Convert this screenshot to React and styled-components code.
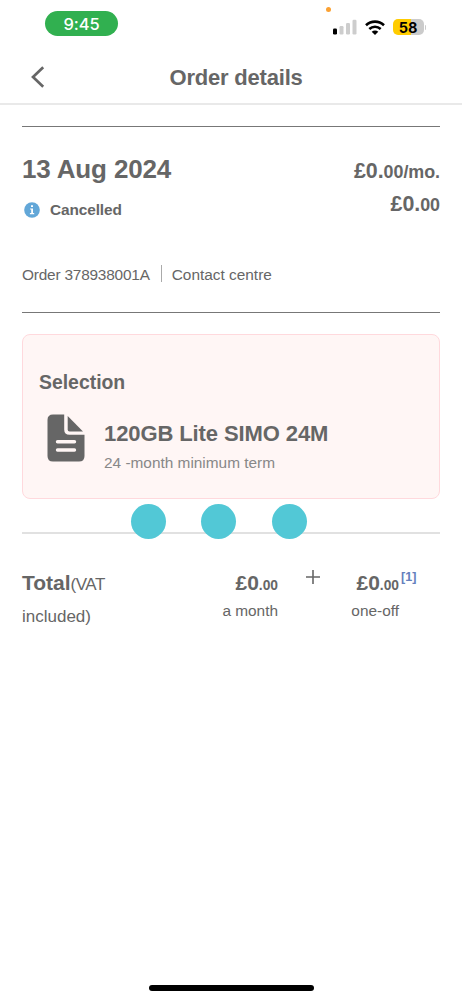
import React from "react";
import styled, { createGlobalStyle } from "styled-components";

function App() {
  return (
    <Screen>
      <GlobalStyle />
      <StatusBar />
      <Header>
        <BackIcon viewBox="0 0 14 22">
          <path d="M12.2 1.2L2 11L12.2 20.8" />
        </BackIcon>
        <Title>Order details</Title>
      </Header>
      <Content>
        <OrderSummary />
        <Selection />
        <Total />
      </Content>
      <HomeIndicator />
    </Screen>
  );
}

function StatusBar() {
  return (
    <StatusContainer>
      <Clock>9:45</Clock>
      <RecordingDot />
      <StatusIcons>
        <svg width="24" height="16" viewBox="0 0 24 16">
          <rect x="0" y="9.5" width="4" height="6" rx="1.2" fill="#000" />
          <rect x="6.5" y="7" width="4" height="8.5" rx="1.2" fill="#cdcdcd" />
          <rect x="13" y="4" width="4" height="11.5" rx="1.2" fill="#cdcdcd" />
          <rect x="19.5" y="0.7" width="4" height="14.8" rx="1.2" fill="#cdcdcd" />
        </svg>
        <WifiIcon viewBox="0 0 20 15">
          <path d="M1 5.3C6.2 0.4 13.8 0.4 19 5.3" />
          <path d="M4.3 9C7.6 6 12.4 6 15.7 9" />
          <path
            className="base"
            d="M10 15L6.7 11.8C8.5 10.2 11.5 10.2 13.3 11.8Z"
          />
        </WifiIcon>
        <Battery>58</Battery>
        <BatteryTip />
      </StatusIcons>
    </StatusContainer>
  );
}

function OrderSummary() {
  return (
    <Summary>
      <SummaryRow>
        <div>
          <OrderDate>13 Aug 2024</OrderDate>
          <OrderStatus>
            <svg width="16" height="16" viewBox="0 0 16 16">
              <circle cx="8" cy="8" r="7.8" fill="#62a7d8" />
              <path
                d="M7 3.2H9V5H7ZM6.1 6.4H9V11H10.2V12.2H5.9V11H7.2V7.6H6.1Z"
                fill="#fff"
              />
            </svg>
            Cancelled
          </OrderStatus>
        </div>
        <Prices>
          <Price>
            £0.<small>00/mo.</small>
          </Price>
          <Price>
            £0.<small>00</small>
          </Price>
        </Prices>
      </SummaryRow>
      <OrderInfo>
        <span>Order 378938001A</span>
        <Separator />
        <Channel>Contact centre</Channel>
      </OrderInfo>
    </Summary>
  );
}

function Selection() {
  return (
    <Card>
      <CardTitle>Selection</CardTitle>
      <Plan>
        <svg width="38" height="48" viewBox="0 0 38 48">
          <path
            d="M6 0.5H17.2V15.5Q17.2 20.8 22.5 20.8H37.5V42Q37.5 47.5 32 47.5H6Q0.5 47.5 0.5 42V6Q0.5 0.5 6 0.5Z"
            fill="#666"
          />
          <path d="M20.7 2L36 17.5H22.5Q20.7 17.5 20.7 15.7Z" fill="#666" />
          <path
            d="M10.5 27.7H27.5M10.5 36H27.5"
            stroke="#fff6f5"
            strokeWidth="3.4"
            strokeLinecap="round"
          />
        </svg>
        <div>
          <PlanName>120GB Lite SIMO 24M</PlanName>
          <PlanTerm>24 -month minimum term</PlanTerm>
        </div>
      </Plan>
    </Card>
  );
}

function Total() {
  return (
    <TotalContainer>
      <Loader>
        <Dot />
        <Dot />
        <Dot />
      </Loader>
      <TotalLabel>
        <TotalLine>
          <strong>Total</strong>
          <span>(VAT</span>
        </TotalLine>
        <TotalLine>included)</TotalLine>
      </TotalLabel>
      <Amount $width={136}>
        <AmountValue>
          £0<small>.00</small>
        </AmountValue>
        <AmountUnit>a month</AmountUnit>
      </Amount>
      <PlusIcon viewBox="0 0 14 14">
        <path d="M7 0V14M0 7H14" />
      </PlusIcon>
      <Amount $width={79}>
        <AmountValue>
          £0<small>.00</small>
        </AmountValue>
        <AmountUnit>one-off</AmountUnit>
      </Amount>
      <Footnote>[1]</Footnote>
    </TotalContainer>
  );
}

export default App;

const GlobalStyle = createGlobalStyle`
  * {
    box-sizing: border-box;
  }

  body {
    margin: 0;
    background-color: #fff;
  }

  svg {
    display: block;
    flex-shrink: 0;
  }
`;

const Screen = styled.div`
  display: flex;
  flex-direction: column;
  width: 462px;
  height: 999px;
  overflow: hidden;
  color: #666;
  background-color: #fff;
  font-family: "Liberation Sans", Arial, sans-serif;
`;

const StatusContainer = styled.div`
  display: flex;
  height: 50px;
  padding-left: 45px;
`;

const Clock = styled.div`
  width: 73px;
  height: 25px;
  margin-top: 11px;
  border-radius: 13px;
  background-color: #31b050;
  color: #fff;
  font-family: Inter, sans-serif;
  font-size: 16.5px;
  font-weight: 500;
  line-height: 26px;
  letter-spacing: -0.1px;
  text-align: center;
`;

const RecordingDot = styled.div`
  width: 5px;
  height: 5px;
  margin: 7px 0 0 207.5px;
  border-radius: 50%;
  background-color: #fba132;
`;

const StatusIcons = styled.div`
  display: flex;
  align-items: center;
  height: 16px;
  margin: 19px 0 0 2px;
`;

const WifiIcon = styled.svg`
  width: 20px;
  height: 15px;
  margin-left: 8px;
  fill: none;
  stroke: #000;
  stroke-width: 2.6;

  .base {
    fill: #000;
    stroke: none;
  }
`;

const Battery = styled.div`
  width: 31px;
  height: 16px;
  margin-left: 8px;
  border-radius: 5px;
  background: linear-gradient(90deg, #ffcc00 18px, #cbcbcb 18px);
  color: #000;
  font-family: Inter, sans-serif;
  font-size: 14.5px;
  font-weight: 700;
  line-height: 17px;
  text-align: center;
`;

const BatteryTip = styled.div`
  width: 1.5px;
  height: 5px;
  margin-left: 1px;
  border-radius: 0 2px 2px 0;
  background-color: #cbcbcb;
`;

const Header = styled.header`
  display: flex;
  align-items: center;
  height: 55px;
  border-bottom: 2px solid #e9e9e9;
  padding-left: 31px;
`;

const BackIcon = styled.svg`
  width: 14px;
  height: 22px;
  fill: none;
  stroke: #666;
  stroke-width: 2.7;
`;

const Title = styled.h1`
  margin: 3px 0 0 124.5px;
  font-size: 22px;
  line-height: 26px;
  letter-spacing: -0.2px;
`;

const Content = styled.main`
  flex: 1;
  padding: 21px 22px 0;
`;

const Summary = styled.section`
  height: 187px;
  border-top: 1px solid #777;
  border-bottom: 1px solid #777;
`;

const SummaryRow = styled.div`
  display: flex;
  justify-content: space-between;
  height: 134px;
  padding-top: 27px;
`;

const OrderDate = styled.h2`
  margin: 0;
  font-size: 26px;
  line-height: 30px;
  letter-spacing: -0.15px;
`;

const OrderStatus = styled.div`
  display: flex;
  align-items: center;
  gap: 10px;
  margin: 16px 0 0 2px;
  font-size: 15.4px;
  font-weight: 700;
  line-height: 20px;
  letter-spacing: -0.1px;
`;

const Prices = styled.div`
  padding-top: 1px;
  text-align: right;
`;

const Price = styled.div`
  font-size: 21.4px;
  font-weight: 700;
  line-height: 32px;
  letter-spacing: -0.05px;

  small {
    font-size: 17.9px;
  }
`;

const OrderInfo = styled.div`
  display: flex;
  align-items: center;
  height: 27px;
  font-size: 15.4px;
  line-height: 20px;
  letter-spacing: -0.2px;
`;

const Channel = styled.span`
  letter-spacing: 0;
`;

const Separator = styled.span`
  width: 1px;
  height: 17px;
  margin: 0 10px 2px 11px;
  background-color: #aaa;
`;

const Card = styled.section`
  height: 165px;
  margin-top: 21px;
  padding: 36px 16px 0;
  border: 1px solid #ffd9dd;
  border-radius: 8px;
  background-color: #fff6f5;
`;

const CardTitle = styled.h3`
  margin: 0;
  font-size: 19.4px;
  line-height: 22px;
`;

const Plan = styled.div`
  display: flex;
  gap: 19px;
  margin: 21px 0 0 8px;
`;

const PlanName = styled.div`
  margin-top: 7px;
  font-size: 22px;
  font-weight: 700;
  line-height: 26px;
  letter-spacing: -0.1px;
  white-space: nowrap;
`;

const PlanTerm = styled.div`
  margin-top: 6px;
  color: #888;
  font-size: 15.4px;
  line-height: 20px;
`;

const TotalContainer = styled.section`
  position: relative;
  display: flex;
  align-items: flex-start;
  margin-top: 33px;
  padding-top: 37px;
  border-top: 2px solid #e1e1e1;
`;

// loading dots float over the divider
const Loader = styled.div`
  position: absolute;
  top: -30px;
  left: 108.5px;
  display: flex;
  gap: 35.7px;
`;

const Dot = styled.div`
  width: 35px;
  height: 35px;
  border-radius: 50%;
  background-color: #52c8d6;
`;

const TotalLabel = styled.div`
  display: flex;
  flex-direction: column;
  gap: 8px;
  width: 120px;
  font-size: 17px;
`;

const TotalLine = styled.div`
  display: flex;
  align-items: baseline;
  line-height: 24px;

  strong {
    font-size: 21px;
  }

  span {
    letter-spacing: -0.5px;
  }
`;

const Amount = styled.div`
  display: flex;
  flex-direction: column;
  align-items: flex-end;
  gap: 3px;
  width: ${(props) => props.$width}px;
`;

const AmountValue = styled.div`
  font-size: 21px;
  font-weight: 700;
  line-height: 24px;
  white-space: nowrap;

  small {
    font-size: 13.8px;
  }
`;

const AmountUnit = styled.div`
  font-size: 15.4px;
  line-height: 20px;
`;

const Footnote = styled.sup`
  margin: -3px 0 0 2px;
  color: #6480bd;
  font-size: 12.6px;
  font-weight: 700;
  line-height: 18px;
`;

const PlusIcon = styled.svg`
  width: 14px;
  height: 14px;
  margin: -1px 0 0 28px;
  stroke: #666;
  stroke-width: 1.6;
`;

const HomeIndicator = styled.div`
  width: 165px;
  height: 6px;
  margin: 0 auto 8px;
  border-radius: 3px;
  background-color: #000;
`;
